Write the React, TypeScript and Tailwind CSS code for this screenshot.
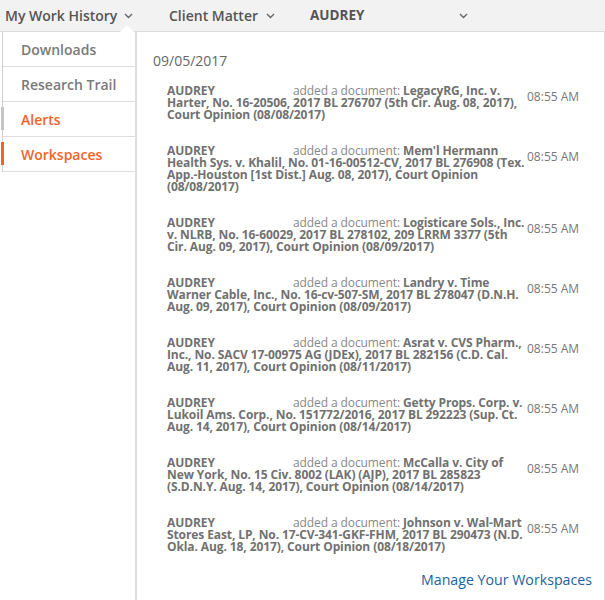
import { ReactNode } from "react";

const entries = [
	"LegacyRG, Inc. v. Harter, No. 16-20506, 2017 BL 276707 (5th Cir. Aug. 08, 2017), Court Opinion (08/08/2017)",
	"Mem'l Hermann Health Sys. v. Khalil, No. 01-16-00512-CV, 2017 BL 276908 (Tex. App.-Houston [1st Dist.] Aug. 08, 2017), Court Opinion (08/08/2017)",
	"Logisticare Sols., Inc. v. NLRB, No. 16-60029, 2017 BL 278102, 209 LRRM 3377 (5th Cir. Aug. 09, 2017), Court Opinion (08/09/2017)",
	"Landry v. Time Warner Cable, Inc., No. 16-cv-507-SM, 2017 BL 278047 (D.N.H. Aug. 09, 2017), Court Opinion (08/09/2017)",
	"Asrat v. CVS Pharm., Inc., No. SACV 17-00975 AG (JDEx), 2017 BL 282156 (C.D. Cal. Aug. 11, 2017), Court Opinion (08/11/2017)",
	"Getty Props. Corp. v. Lukoil Ams. Corp., No. 151772/2016, 2017 BL 292223 (Sup. Ct. Aug. 14, 2017), Court Opinion (08/14/2017)",
	"McCalla v. City of New York, No. 15 Civ. 8002 (LAK) (AJP), 2017 BL 285823 (S.D.N.Y. Aug. 14, 2017), Court Opinion (08/14/2017)",
	"Johnson v. Wal-Mart Stores East, LP, No. 17-CV-341-GKF-FHM, 2017 BL 290473 (N.D. Okla. Aug. 18, 2017), Court Opinion (08/18/2017)",
];

function Chevron() {
	return (
		<svg width="9" height="6" viewBox="0 0 9 6" className="shrink-0">
			<path d="M1 1l3.5 3.5L8 1" fill="none" stroke="#666" strokeWidth="1.4" />
		</svg>
	);
}

function MenuItem({ children, active, bar }: { children: ReactNode; active?: boolean; bar?: string }) {
	return (
		<div className="relative h-[35px] flex items-center pl-[18px] border-b border-[#dedede]">
			{bar && <div className={`absolute left-[-2px] top-[5px] h-[23px] w-[3px] ${bar}`} />}
			<span className={`text-[14px] font-semibold ${active ? "text-[#f0642a]" : "text-[#7a7a7a]"}`}>
				{children}
			</span>
		</div>
	);
}

export default function App() {
	return (
		<div className="w-[605px] h-[600px] overflow-hidden bg-white font-['Open_Sans',sans-serif]">
			{/* top bar */}
			<div className="relative h-[32px] bg-[#f2f2f2] border-b border-[#dcdcdc] flex items-center text-[#555]">
				<div className="flex items-center gap-[7px] pl-[5px] w-[169px]">
					<span className="text-[14px] font-semibold">My Work History</span>
					<Chevron />
				</div>
				<div className="flex items-center gap-[8px] w-[141px]">
					<span className="text-[14px] font-semibold">Client Matter</span>
					<Chevron />
				</div>
				<div className="flex items-center w-[158px] justify-between">
					<span className="text-[13.5px] font-bold">AUDREY</span>
					<Chevron />
				</div>
				<div className="absolute left-[120px] bottom-[-1px] w-0 h-0 border-l-[7px] border-r-[7px] border-b-[7px] border-l-transparent border-r-transparent border-b-white" />
			</div>

			<div className="flex h-[568px]">
				{/* menu */}
				<div className="w-[135px] shrink-0 pl-[2px]">
					<div className="border-l border-[#d0d0d0]">
						<MenuItem>Downloads</MenuItem>
						<MenuItem>Research Trail</MenuItem>
						<MenuItem active bar="bg-[#c4c4c4]">Alerts</MenuItem>
						<MenuItem active bar="bg-[#f0642a]">Workspaces</MenuItem>
					</div>
				</div>

				{/* content */}
				<div className="flex-1 border-l-2 border-r border-[#dedede] pl-[16px] pr-[10px] pt-[19px] flex flex-col">
					<div className="text-[14px] text-[#666] leading-[20px]">09/05/2017</div>
					<div className="flex flex-col gap-[24px] pl-[14px] mt-[14px]">
						{entries.map((t, i) => (
							<div key={i} className="flex items-start">
								<p className="w-[358px] shrink-0 text-[12px] leading-[12px] text-[#717171] tracking-[-0.1px]">
									<span className="inline-block w-[126px] font-bold">AUDREY</span>
									<span className="text-[#888]">added a document: </span>
									<span className="font-bold">{t}</span>
								</p>
								<span className="ml-[2px] pt-[5px] text-[12px] leading-[14px] text-[#777] whitespace-nowrap">
									08:55 AM
								</span>
							</div>
						))}
					</div>
					<div className="mt-auto mb-[10px] text-right text-[14.2px] text-[#1f5f9e] pr-[2px]">
						Manage Your Workspaces
					</div>
				</div>
			</div>
		</div>
	);
}
